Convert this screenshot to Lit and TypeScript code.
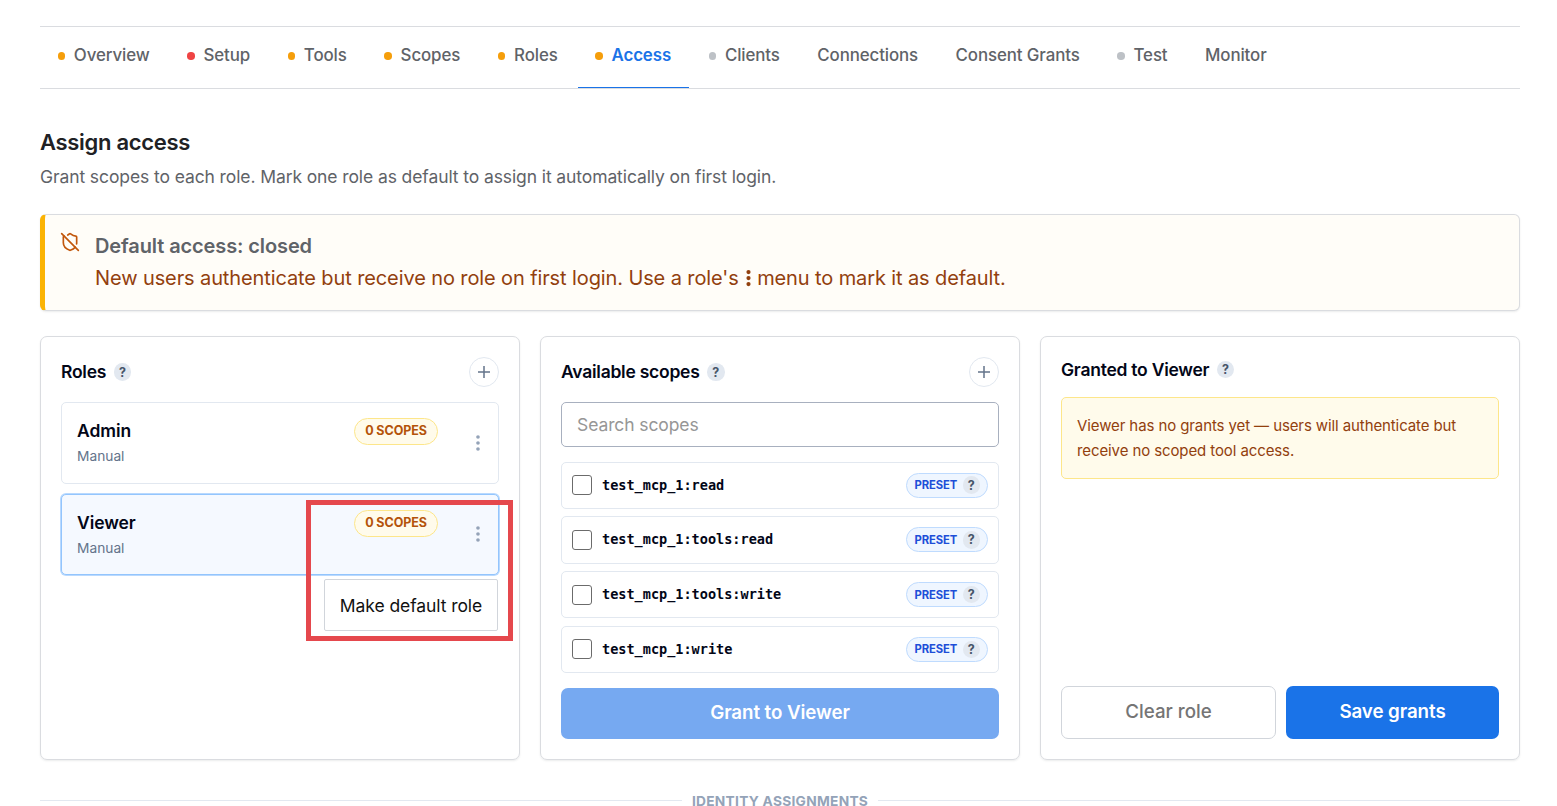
import { LitElement, html, css, svg, nothing } from "lit";
import { customElement, property } from "lit/decorators.js";
import { classMap } from "lit/directives/class-map.js";

interface Tab {
  label: string;
  tone?: "amber" | "red" | "gray";
  active?: boolean;
}

const TABS: Tab[] = [
  { label: "Overview", tone: "amber" },
  { label: "Setup", tone: "red" },
  { label: "Tools", tone: "amber" },
  { label: "Scopes", tone: "amber" },
  { label: "Roles", tone: "amber" },
  { label: "Access", tone: "amber", active: true },
  { label: "Clients", tone: "gray" },
  { label: "Connections" },
  { label: "Consent Grants" },
  { label: "Test", tone: "gray" },
  { label: "Monitor" },
];

const SCOPES = ["test_mcp_1:read", "test_mcp_1:tools:read", "test_mcp_1:tools:write", "test_mcp_1:write"];

const dots = svg`<circle cx="12" cy="4.8" r="2.2"/><circle cx="12" cy="12" r="2.2"/><circle cx="12" cy="19.2" r="2.2"/>`;

@customElement("help-dot")
export class HelpDot extends LitElement {
  static styles = css`
    :host {
      display: flex;
      align-items: center;
      justify-content: center;
      width: 17.5px;
      height: 17.5px;
      border-radius: 50%;
      background: #e2e8f0;
      color: #475569;
      font: 700 12.5px/17px Inter, sans-serif;
      letter-spacing: 0;
      flex: none;
    }
  `;
  render() {
    return html`?`;
  }
}

@customElement("role-card")
export class RoleCard extends LitElement {
  @property() name = "";
  @property({ type: Boolean, reflect: true }) selected = false;

  static styles = css`
    :host {
      display: flex;
      box-sizing: border-box;
      height: 81.5px;
      padding: 14px 10px 0 15px;
      border: 1px solid #e2e8f0;
      border-radius: 5px;
      background: #fff;
    }
    :host([selected]) {
      border-color: #93c5fd;
      background: #f5f9ff;
      box-shadow: 0 0 0 1px rgba(147, 197, 253, 0.65);
    }
    .text {
      flex: 1;
    }
    .name {
      font-size: 17.5px;
      font-weight: 600;
      line-height: 27px;
      letter-spacing: -0.08px;
      color: #020617;
    }
    .kind {
      font-size: 13.75px;
      line-height: 22px;
      color: #64748b;
      margin-top: 1px;
    }
    .count {
      box-sizing: border-box;
      width: 84px;
      height: 27px;
      margin-top: 1px;
      border: 1px solid #fde68a;
      border-radius: 14px;
      background: #fffbeb;
      color: #b45309;
      font-size: 12.5px;
      font-weight: 700;
      line-height: 24px;
      letter-spacing: -0.08px;
      text-align: center;
      white-space: nowrap;
    }
    .more {
      width: 20px;
      height: 20px;
      margin: 16px 0 0 30px;
      fill: #94a3b8;
    }
    :host([selected]) .more {
      margin-top: 15.5px;
    }
  `;
  render() {
    return html`
      <div class="text">
        <div class="name">${this.name}</div>
        <div class="kind">Manual</div>
      </div>
      <div class="count">0 SCOPES</div>
      <svg class="more" viewBox="0 0 24 24">${dots}</svg>
    `;
  }
}

@customElement("scope-row")
export class ScopeRow extends LitElement {
  @property() scope = "";

  static styles = css`
    :host {
      display: flex;
      align-items: center;
      box-sizing: border-box;
      height: 47.25px;
      padding: 0 10px;
      border: 1px solid #e2e8f0;
      border-radius: 5px;
    }
    .box {
      box-sizing: border-box;
      width: 20px;
      height: 20px;
      border: 1px solid #6b6b6b;
      border-radius: 3px;
      background: #fff;
    }
    .id {
      flex: 1;
      margin-left: 10px;
      padding-bottom: 1.2px;
      font: 700 13.54px/20px "DejaVu Sans Mono", monospace;
      color: #020617;
    }
    .preset {
      display: flex;
      align-items: center;
      box-sizing: border-box;
      width: 82px;
      height: 25px;
      padding: 0 7px 0 7.5px;
      justify-content: space-between;
      border: 1px solid #bfdbfe;
      border-radius: 13px;
      background: #eff6ff;
      color: #1d4ed8;
      font-size: 11.25px;
      font-weight: 700;
      letter-spacing: -0.1px;
    }
  `;
  render() {
    return html`
      <span class="box"></span>
      <span class="id">${this.scope}</span>
      <span class="preset"><span>PRESET</span><help-dot></help-dot></span>
    `;
  }
}

@customElement("app-root")
export class AppRoot extends LitElement {
  static styles = css`
    :host {
      display: block;
      box-sizing: border-box;
      height: 806px;
      overflow: hidden;
      padding: 26px 37px 0 40px;
      background: #fff;
      font-family: Inter, sans-serif;
      color: #020617;
    }
    .tabs {
      display: flex;
      gap: 2.5px;
      box-sizing: border-box;
      height: 63px;
      border-top: 1px solid #dadce0;
      border-bottom: 1px solid #dadce0;
    }
    .tab {
      display: flex;
      align-items: center;
      gap: 8.85px;
      box-sizing: border-box;
      padding: 0 17.5px 4px;
      border-bottom: 1px solid transparent;
      color: #5f6368;
      font-size: 16.875px;
      font-weight: 500;
      letter-spacing: -0.1px;
      white-space: nowrap;
    }
    .tab.active {
      color: #1a73e8;
      font-weight: 600;
      border-bottom-color: #1a73e8;
    }
    .dot {
      width: 7.5px;
      height: 7.5px;
      margin-top: 2px;
      border-radius: 50%;
    }
    .amber { background: #f59e0b; }
    .red { background: #ef4444; }
    .gray { background: #bdc1c6; }
    h1 {
      margin: 38px 0 0;
      font-size: 22px;
      font-weight: 600;
      line-height: 30px;
      letter-spacing: -0.3px;
      color: #202124;
    }
    .lead {
      margin: 7px 0 0;
      font-size: 17.5px;
      line-height: 26px;
      letter-spacing: -0.1px;
      color: #5f6368;
    }
    .alert {
      display: flex;
      box-sizing: border-box;
      height: 97px;
      margin-top: 24px;
      padding: 15px 15px 0;
      border: 1px solid #dadce0;
      border-left: 5px solid #fbb304;
      border-radius: 6px;
      background: #fffdf8;
      box-shadow: 0 1px 2px rgba(60, 64, 67, 0.1);
    }
    .shield {
      flex: none;
      width: 20px;
      height: 20px;
      margin: 2px 15px 0 0;
      fill: none;
      stroke: #c2570c;
      stroke-width: 2;
      stroke-linecap: round;
      stroke-linejoin: round;
    }
    .alert-title {
      font-size: 20px;
      font-weight: 600;
      line-height: 32px;
      letter-spacing: -0.11px;
      color: #5f6368;
    }
    .alert-text {
      font-size: 20px;
      line-height: 32px;
      letter-spacing: -0.11px;
      color: #92400e;
    }
    .inline-more {
      width: 9px;
      height: 18px;
      vertical-align: -2px;
      margin: 0 -1.25px 0 -0.25px;
      fill: #92400e;
    }
    .panels {
      display: grid;
      grid-template-columns: repeat(3, 1fr);
      gap: 20px;
      margin-top: 25px;
    }
    .panel {
      display: flex;
      flex-direction: column;
      box-sizing: border-box;
      height: 424px;
      padding: 20px;
      border: 1px solid #dadce0;
      border-radius: 7px;
      box-shadow: 0 1px 2px rgba(60, 64, 67, 0.1);
    }
    .head {
      display: flex;
      align-items: center;
      gap: 7.5px;
      height: 30px;
      margin-bottom: 15px;
      font-size: 17.5px;
      font-weight: 600;
      letter-spacing: -0.25px;
    }
    .head .title {
      padding-bottom: 2px;
    }
    .head.short {
      height: 25px;
    }
    .head.short .title {
      padding-bottom: 0;
    }
    .add {
      display: flex;
      align-items: center;
      justify-content: center;
      box-sizing: border-box;
      width: 30px;
      height: 30px;
      margin-left: auto;
      border: 1px solid #e2e8f0;
      border-radius: 50%;
    }
    .plus {
      width: 18px;
      height: 18px;
      fill: none;
      stroke: #64748b;
      stroke-width: 1.5;
    }
    .roles {
      position: relative;
      display: flex;
      flex-direction: column;
      gap: 10px;
    }
    .menu {
      position: absolute;
      top: 177px;
      right: 1px;
      box-sizing: border-box;
      width: 174px;
      height: 52px;
      border: 1px solid #d1d5db;
      border-radius: 2px;
      background: #fff;
      color: #111;
      font-size: 17.5px;
      line-height: 51px;
      letter-spacing: -0.08px;
      text-align: center;
      white-space: nowrap;
    }
    .highlight {
      position: absolute;
      top: 98px;
      right: -14px;
      box-sizing: border-box;
      width: 207px;
      height: 141px;
      border: 5px solid #e5484d;
    }
    .search {
      box-sizing: border-box;
      height: 45px;
      padding: 0 15px;
      border: 1px solid #a8b0bf;
      border-radius: 5px;
      color: #969696;
      font-size: 17.5px;
      line-height: 43px;
      letter-spacing: -0.1px;
    }
    .scopes {
      display: flex;
      flex-direction: column;
      gap: 7.5px;
      margin-top: 14.6px;
    }
    .btn {
      display: flex;
      align-items: center;
      justify-content: center;
      box-sizing: border-box;
      border-radius: 7px;
      font-size: 18.75px;
      font-weight: 600;
      letter-spacing: -0.08px;
      white-space: nowrap;
    }
    .grant {
      height: 51px;
      margin-top: auto;
      padding-bottom: 2px;
      background: #76a9f1;
      color: #fff;
    }
    .notice {
      box-sizing: border-box;
      height: 82px;
      padding: 15px;
      border: 1px solid #fde68a;
      border-radius: 5px;
      background: #fffbeb;
      color: #92400e;
      font-size: 15px;
      line-height: 25px;
      letter-spacing: -0.1px;
    }
    .actions {
      display: grid;
      grid-template-columns: 215px 213px;
      gap: 10px;
      margin-top: auto;
    }
    .actions .btn {
      height: 53px;
      padding-bottom: 2px;
    }
    .clear {
      border: 1px solid #d1d5db;
      color: #757575;
      font-weight: 500;
      letter-spacing: 0;
    }
    .save {
      background: #1a73e8;
      color: #fff;
    }
    .divider {
      display: flex;
      align-items: center;
      gap: 10px;
      height: 20px;
      margin-top: 31px;
      color: #94a3b8;
      font-size: 13.75px;
      font-weight: 700;
      line-height: 20px;
      letter-spacing: 0.27px;
      white-space: nowrap;
    }
    .rule {
      flex: 1;
      height: 1px;
      margin-top: -1px;
      background: #e2e8f0;
    }
  `;

  private addButton() {
    return html`<span class="add"><svg class="plus" viewBox="0 0 18 18"><path d="M9 3v12M3 9h12" /></svg></span>`;
  }

  render() {
    return html`
      <nav class="tabs">
        ${TABS.map(
          (t) => html`<div class=${classMap({ tab: true, active: !!t.active })}>
            ${t.tone ? html`<span class=${classMap({ dot: true, [t.tone]: true })}></span>` : nothing}<span>${t.label}</span>
          </div>`
        )}
      </nav>

      <h1>Assign access</h1>
      <p class="lead">Grant scopes to each role. Mark one role as default to assign it automatically on first login.</p>

      <section class="alert">
        <svg class="shield" viewBox="0 0 24 24">
          <path d="m2 2 20 20" />
          <path d="M5 5a1 1 0 0 0-1 1v7c0 5 3.5 7.5 7.67 8.94a1 1 0 0 0 .67.01c2.35-.82 4.48-1.97 5.9-3.71" />
          <path d="M9.309 3.652A12.252 12.252 0 0 0 11.24 2.28a1.17 1.17 0 0 1 1.52 0C14.51 3.81 17 5 19 5a1 1 0 0 1 1 1v7a9.784 9.784 0 0 1-.08 1.264" />
        </svg>
        <div>
          <div class="alert-title">Default access: closed</div>
          <div class="alert-text">New users authenticate but receive no role on first login. Use a role's <svg class="inline-more" viewBox="0 0 9 18"><circle cx="4.5" cy="3.1" r="2.1"/><circle cx="4.5" cy="9.1" r="2.1"/><circle cx="4.5" cy="15.1" r="2.1"/></svg> menu to mark it as default.</div>
        </div>
      </section>

      <div class="panels">
        <section class="panel">
          <div class="head"><span class="title">Roles</span><help-dot></help-dot>${this.addButton()}</div>
          <div class="roles">
            <role-card name="Admin"></role-card>
            <role-card name="Viewer" selected></role-card>
            <div class="menu">Make default role</div>
            <div class="highlight"></div>
          </div>
        </section>

        <section class="panel">
          <div class="head"><span class="title">Available scopes</span><help-dot></help-dot>${this.addButton()}</div>
          <div class="search">Search scopes</div>
          <div class="scopes">${SCOPES.map((s) => html`<scope-row scope=${s}></scope-row>`)}</div>
          <div class="btn grant">Grant to Viewer</div>
        </section>

        <section class="panel">
          <div class="head short"><span class="title">Granted to Viewer</span><help-dot></help-dot></div>
          <div class="notice">Viewer has no grants yet — users will authenticate but receive no scoped tool access.</div>
          <div class="actions">
            <div class="btn clear">Clear role</div>
            <div class="btn save">Save grants</div>
          </div>
        </section>
      </div>

      <div class="divider"><span class="rule"></span><span>IDENTITY ASSIGNMENTS</span><span class="rule"></span></div>
    `;
  }
}
